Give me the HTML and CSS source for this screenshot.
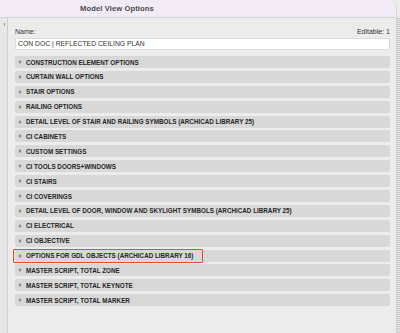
FILE: index.html
```html
<!DOCTYPE html>
<html>
<head>
<meta charset="utf-8">
<link rel="stylesheet" href="styles.css">
</head>
<body>
<div class="window">
  <div class="titlebar"><span class="title">Model View Options</span></div>
  <div class="main">
    <div class="leftstrip"><span class="grip"></span></div>
    <div class="panel">
      <div class="namerow"><span>Name:</span><span>Editable: 1</span></div>
      <div class="input">CON DOC | REFLECTED CEILING PLAN</div>
      <div class="list">
        <div class="row"><span class="tri"></span>CONSTRUCTION ELEMENT OPTIONS</div>
        <div class="row"><span class="tri"></span>CURTAIN WALL OPTIONS</div>
        <div class="row"><span class="tri"></span>STAIR OPTIONS</div>
        <div class="row"><span class="tri"></span>RAILING OPTIONS</div>
        <div class="row"><span class="tri"></span>DETAIL LEVEL OF STAIR AND RAILING SYMBOLS (ARCHICAD LIBRARY 25)</div>
        <div class="row"><span class="tri"></span>CI CABINETS</div>
        <div class="row"><span class="tri"></span>CUSTOM SETTINGS</div>
        <div class="row"><span class="tri"></span>CI TOOLS DOORS+WINDOWS</div>
        <div class="row"><span class="tri"></span>CI STAIRS</div>
        <div class="row"><span class="tri"></span>CI COVERINGS</div>
        <div class="row"><span class="tri"></span>DETAIL LEVEL OF DOOR, WINDOW AND SKYLIGHT SYMBOLS (ARCHICAD LIBRARY 25)</div>
        <div class="row"><span class="tri"></span>CI ELECTRICAL</div>
        <div class="row"><span class="tri"></span>CI OBJECTIVE</div>
        <div class="row highlighted"><span class="tri"></span>OPTIONS FOR GDL OBJECTS (ARCHICAD LIBRARY 16)<span class="mark"></span></div>
        <div class="row"><span class="tri"></span>MASTER SCRIPT, TOTAL ZONE</div>
        <div class="row"><span class="tri"></span>MASTER SCRIPT, TOTAL KEYNOTE</div>
        <div class="row"><span class="tri"></span>MASTER SCRIPT, TOTAL MARKER</div>
      </div>
    </div>
    <div class="rightstrip"></div>
  </div>
</div>
</body>
</html>
```
FILE: styles.css
```css
* { box-sizing: border-box; }
html, body { margin: 0; padding: 0; }
body {
  width: 400px;
  height: 333px;
  overflow: hidden;
  background: #ececec;
  font-family: "Liberation Sans", Arial, sans-serif;
  color: #333;
}
.window {
  height: 333px;
  display: flex;
  flex-direction: column;
}
.titlebar {
  height: 18px;
  flex: none;
  background: #f2ebf5;
  border-bottom: 1px solid #d9d3dc;
  border-right: 1px solid #d4d4d4;
  border-top-right-radius: 8px;
  margin-right: 3px;
  padding-left: 80px;
  display: flex;
  align-items: center;
}
.title {
  font-size: 7.6px;
  font-weight: bold;
  color: #4b4b4b;
  letter-spacing: 0.1px;
}
.main {
  flex: 1;
  display: flex;
}
.leftstrip {
  width: 8px;
  flex: none;
  background: #e7e7e7;
  border-right: 1px solid #cfcfcf;
  position: relative;
}
.grip {
  position: absolute;
  left: 4px;
  top: 5px;
  width: 1px;
  height: 3px;
  background: #999;
}
.panel {
  flex: 1;
  padding: 8px 6px 0 7px;
}
.namerow {
  display: flex;
  justify-content: space-between;
  font-size: 7px;
  color: #333;
  height: 11px;
  line-height: 11px;
}
.input {
  margin-top: 1px;
  height: 12px;
  background: #fff;
  border: 1px solid #dcdcdc;
  border-radius: 1px;
  font-size: 6.8px;
  line-height: 10px;
  padding-left: 2px;
  color: #333;
}
.list {
  margin-top: 6px;
  display: flex;
  flex-direction: column;
  gap: 2.9px;
}
.row {
  height: 12px;
  background: #d8d8d8;
  border-radius: 2px;
  display: flex;
  align-items: center;
  font-size: 6.3px;
  font-weight: bold;
  letter-spacing: 0;
  color: #262626;
  white-space: nowrap;
  position: relative;
}
.tri {
  width: 0;
  height: 0;
  border-top: 2.5px solid transparent;
  border-bottom: 2.5px solid transparent;
  border-left: 3.5px solid #8a8a8a;
  margin-left: 4px;
  margin-right: 4px;
}
.highlighted .mark {
  position: absolute;
  left: -2px;
  top: -1px;
  width: 190px;
  height: 14px;
  border: 1.5px solid #ee4a2e;
  border-radius: 1px;
}
.rightstrip {
  width: 4px;
  flex: none;
  border-left: 1px solid #d2d2d2;
  background: repeating-linear-gradient(0deg, #c9c9c9 0 1px, #e6e6e6 1px 2px);
}
```
